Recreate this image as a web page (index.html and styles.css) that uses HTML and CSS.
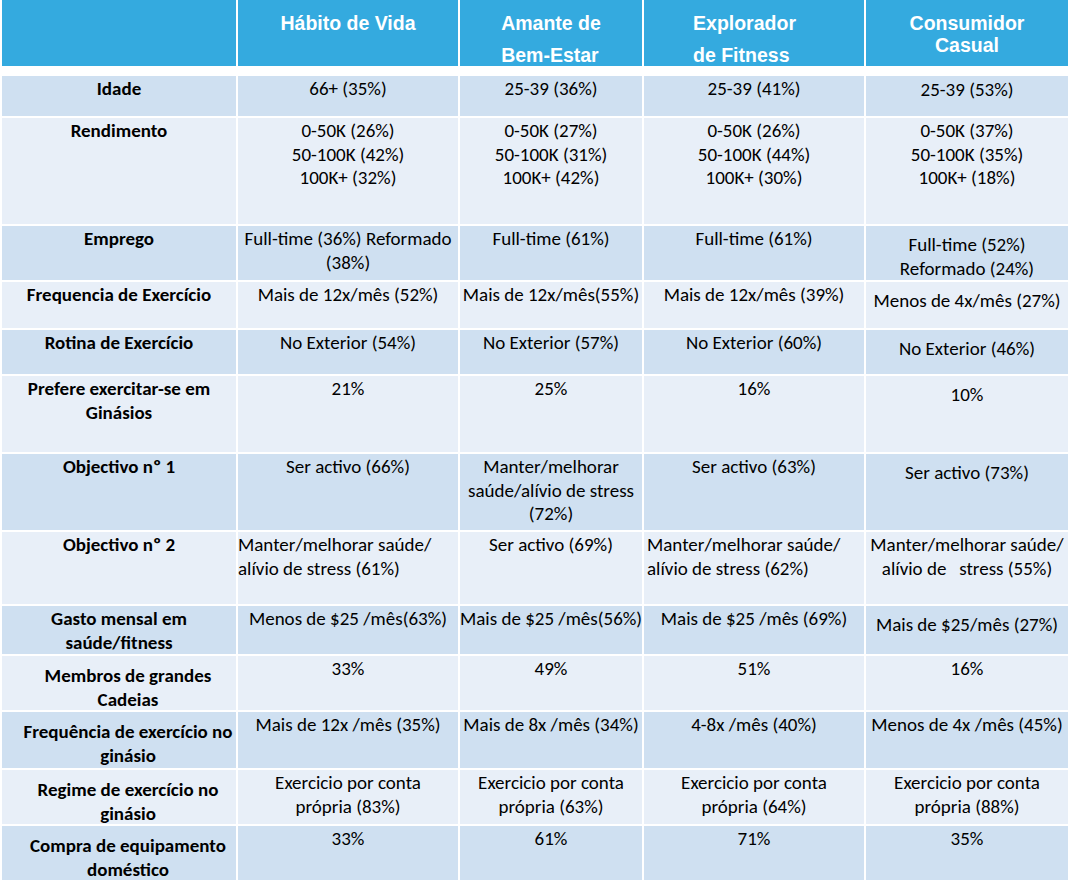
FILE: index.html
```html
<!DOCTYPE html>
<html lang="pt">
<head>
<meta charset="utf-8">
<title>Segmentos</title>
<link rel="stylesheet" href="styles.css">
</head>
<body>
<div class="table">
  <div class="row head">
    <div class="hc"></div>
    <div class="hc">Hábito de Vida</div>
    <div class="hc"><span class="hblock">Amante de<br>Bem-Estar</span></div>
    <div class="hc shiftl"><span class="hblock">Explorador<br>de Fitness</span></div>
    <div class="hc tight">Consumidor<br>Casual</div>
  </div>

  <div class="row dark r40">
    <div class="lab">Idade</div>
    <div class="c">66+ (35%)</div>
    <div class="c">25-39 (36%)</div>
    <div class="c">25-39 (41%)</div>
    <div class="c nudge">25-39 (53%)</div>
  </div>

  <div class="row light r106">
    <div class="lab">Rendimento</div>
    <div class="c">0-50K (26%)<br>50-100K (42%)<br>100K+ (32%)</div>
    <div class="c">0-50K (27%)<br>50-100K (31%)<br>100K+ (42%)</div>
    <div class="c">0-50K (26%)<br>50-100K (44%)<br>100K+ (30%)</div>
    <div class="c">0-50K (37%)<br>50-100K (35%)<br>100K+ (18%)</div>
  </div>

  <div class="row dark r54">
    <div class="lab">Emprego</div>
    <div class="c">Full-time (36%) Reformado<br>(38%)</div>
    <div class="c">Full-time (61%)</div>
    <div class="c">Full-time (61%)</div>
    <div class="c low">Full-time (52%)<br>Reformado (24%)</div>
  </div>

  <div class="row light r46">
    <div class="lab">Frequencia de Exercício</div>
    <div class="c">Mais de 12x/mês (52%)</div>
    <div class="c">Mais de 12x/mês(55%)</div>
    <div class="c">Mais de 12x/mês (39%)</div>
    <div class="c low">Menos de 4x/mês (27%)</div>
  </div>

  <div class="row dark r44">
    <div class="lab">Rotina de Exercício</div>
    <div class="c">No Exterior (54%)</div>
    <div class="c">No Exterior (57%)</div>
    <div class="c">No Exterior (60%)</div>
    <div class="c low">No Exterior (46%)</div>
  </div>

  <div class="row light r76">
    <div class="lab">Prefere exercitar-se em<br>Ginásios</div>
    <div class="c">21%</div>
    <div class="c">25%</div>
    <div class="c">16%</div>
    <div class="c low">10%</div>
  </div>

  <div class="row dark r76">
    <div class="lab">Objectivo nº 1</div>
    <div class="c">Ser activo (66%)</div>
    <div class="c">Manter/melhorar<br>saúde/alívio de stress<br>(72%)</div>
    <div class="c">Ser activo (63%)</div>
    <div class="c low">Ser activo (73%)</div>
  </div>

  <div class="row light r72">
    <div class="lab">Objectivo nº 2</div>
    <div class="c left">Manter/melhorar saúde/<br>alívio de stress (61%)</div>
    <div class="c">Ser activo (69%)</div>
    <div class="c left pad3">Manter/melhorar saúde/<br>alívio de stress (62%)</div>
    <div class="c">Manter/melhorar saúde/<br>alívio de&nbsp;&nbsp; stress (55%)</div>
  </div>

  <div class="row dark r48">
    <div class="lab">Gasto mensal em<br>saúde/fitness</div>
    <div class="c">Menos de $25 /mês(63%)</div>
    <div class="c">Mais de $25 /mês(56%)</div>
    <div class="c">Mais de $25 /mês (69%)</div>
    <div class="c low">Mais de $25/mês (27%)</div>
  </div>

  <div class="row light r54">
    <div class="lab lower">Membros de grandes<br>Cadeias</div>
    <div class="c">33%</div>
    <div class="c">49%</div>
    <div class="c">51%</div>
    <div class="c">16%</div>
  </div>

  <div class="row dark r56">
    <div class="lab lower">Frequência de exercício no<br>ginásio</div>
    <div class="c">Mais de 12x /mês (35%)</div>
    <div class="c">Mais de 8x /mês (34%)</div>
    <div class="c">4-8x /mês (40%)</div>
    <div class="c">Menos de 4x /mês (45%)</div>
  </div>

  <div class="row light r54">
    <div class="lab lower">Regime de exercício no<br>ginásio</div>
    <div class="c">Exercicio por conta<br>própria (83%)</div>
    <div class="c">Exercicio por conta<br>própria (63%)</div>
    <div class="c">Exercicio por conta<br>própria (64%)</div>
    <div class="c">Exercicio por conta<br>própria (88%)</div>
  </div>

  <div class="row dark r54">
    <div class="lab lower">Compra de equipamento<br>doméstico</div>
    <div class="c">33%</div>
    <div class="c">61%</div>
    <div class="c">71%</div>
    <div class="c">35%</div>
  </div>
</div>
</body>
</html>
```

FILE: styles.css
```css
html, body {
  margin: 0;
  padding: 0;
  background: #ffffff;
}

body {
  width: 1068px;
  height: 880px;
  overflow: hidden;
}

.table {
  display: flex;
  flex-direction: column;
  gap: 2px;
  padding-left: 2px;
  font-family: Carlito, Calibri, Lato, "Liberation Sans", sans-serif;
  font-size: 19px;
  line-height: 23.5px;
  color: #000000;
}

.row {
  display: grid;
  grid-template-columns: 234px 220px 182px 220px 1fr;
  column-gap: 2px;
  flex: 0 0 auto;
}

.row > div {
  white-space: nowrap;
  box-sizing: border-box;
  min-height: 0;
}

.head {
  height: 66px;
  grid-template-rows: 66px;
  margin-bottom: 8px;
}

.hc {
  background: #34aadf;
  color: #ffffff;
  font-family: "Liberation Sans", Arial, sans-serif;
  font-weight: bold;
  font-size: 19.5px;
  line-height: 32px;
  text-align: center;
  padding-top: 6.5px;
  overflow: hidden;
}

.hc.tight {
  line-height: 22px;
  padding-top: 12px;
}

.hc.shiftl {
  padding-right: 19px;
}

.hblock {
  display: inline-block;
  text-align: left;
}

.dark > div { background: #cfe0f1; }
.light > div { background: #e8eff8; }

.lab {
  font-weight: bold;
  text-align: center;
  padding-top: 1px;
}

.lab.lower {
  padding-top: 8px;
  padding-left: 18px;
}

.c {
  text-align: center;
  padding-top: 1px;
}

.c.left { text-align: left; }
.c.pad3 { padding-left: 3px; }
.c.low { padding-top: 7px; }
.c.nudge { padding-top: 2px; }

.r40 { height: 40px; }
.r44 { height: 44px; }
.r46 { height: 46px; }
.r48 { height: 48px; }
.r54 { height: 54px; }
.r56 { height: 56px; }
.r72 { height: 72px; }
.r76 { height: 76px; }
.r106 { height: 106px; }
```
